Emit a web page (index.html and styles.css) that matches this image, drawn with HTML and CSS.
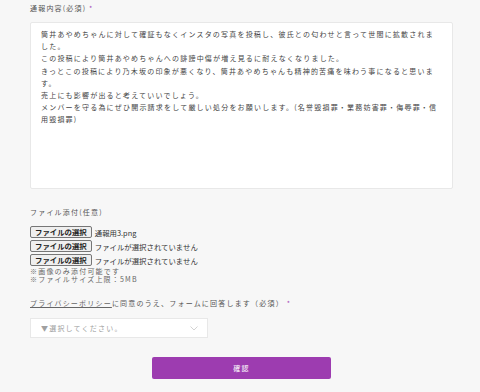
FILE: index.html
```html
<!DOCTYPE html>
<html lang="ja">
<head>
    <meta charset="UTF-8">
    <meta name="viewport" content="width=device-width, initial-scale=1.0">
    <title>通報フォーム</title>
    <link rel="stylesheet" href="styles.css">
</head>
<body>
    <form class="report-form">
        <div class="form-group">
            <label class="form-label" for="content">通報内容(必須) <span class="required">*</span></label>
            <textarea id="content" class="form-textarea">筒井あやめちゃんに対して確証もなくインスタの写真を投稿し、彼氏との匂わせと言って世間に拡散されました。
この投稿により筒井あやめちゃんへの誹謗中傷が増え見るに耐えなくなりました。
きっとこの投稿により乃木坂の印象が悪くなり、筒井あやめちゃんも精神的苦痛を味わう事になると思います。
売上にも影響が出ると考えていいでしょう。
メンバーを守る為にぜひ開示請求をして厳しい処分をお願いします。(名誉毀損罪・業務妨害罪・侮辱罪・信用毀損罪)</textarea>
        </div>

        <div class="form-group files">
            <p class="form-label">ファイル添付(任意)</p>
            <div class="file-row">
                <button type="button" class="file-btn">ファイルの選択</button>
                <span class="file-name">通報用3.png</span>
            </div>
            <div class="file-row">
                <button type="button" class="file-btn">ファイルの選択</button>
                <span class="file-name">ファイルが選択されていません</span>
            </div>
            <div class="file-row">
                <button type="button" class="file-btn">ファイルの選択</button>
                <span class="file-name">ファイルが選択されていません</span>
            </div>
            <p class="file-note">※画像のみ添付可能です<br>※ファイルサイズ上限：5MB</p>
        </div>

        <div class="form-group privacy">
            <p class="form-label"><a href="#" class="policy-link">プライバシーポリシー</a>に同意のうえ、フォームに回答します（必須） <span class="required">*</span></p>
            <div class="select-wrap">
                <select class="form-select">
                    <option>▼選択してください。</option>
                    <option>同意する</option>
                </select>
                <svg class="select-arrow" width="8" height="5" viewBox="0 0 8 5">
                    <path d="M0.5 0.5 L4 4 L7.5 0.5" fill="none" stroke="#c8c8c8" stroke-width="0.8"/>
                </svg>
            </div>
        </div>

        <div class="submit-area">
            <button type="button" class="submit-btn">確認</button>
        </div>
    </form>
</body>
</html>
```

FILE: styles.css
```css
body {
    margin: 0;
    background: #f7f7f7;
    font-family: "Noto Sans CJK JP", "Noto Sans", sans-serif;
    color: #555;
}

.report-form {
    width: 423px;
    margin-left: 30px;
    padding-top: 2px;
}

.form-label {
    display: block;
    margin: 0;
    font-size: 7px;
    line-height: 12px;
    letter-spacing: 1.2px;
    color: #555;
}

.required {
    color: #a64bb8;
}

.form-textarea {
    display: block;
    box-sizing: border-box;
    width: 423px;
    height: 167px;
    margin-top: 8px;
    padding: 5px 11.5px 5px 10px;
    border: 1px solid #e8e8e8;
    border-radius: 2px;
    background: #fff;
    font-family: "Noto Sans CJK JP", "Noto Sans", sans-serif;
    font-size: 7px;
    line-height: 12.2px;
    letter-spacing: 1.2px;
    color: #444;
    resize: none;
    outline: none;
}

.files {
    margin-top: 17px;
}

.files .form-label {
    margin-bottom: 8px;
}

.file-row {
    display: flex;
    align-items: center;
    height: 12px;
    margin-bottom: 2px;
}

.file-btn {
    box-sizing: border-box;
    height: 12px;
    padding: 0 4px;
    border: 1px solid #767676;
    border-radius: 2px;
    background: #efefef;
    font-family: "Noto Sans CJK JP", "Noto Sans", sans-serif;
    font-size: 7.4px;
    font-weight: bold;
    line-height: 10px;
    color: #222;
}

.file-name {
    margin-left: 3px;
    font-size: 7.4px;
    color: #333;
}

.file-note {
    margin: -1px 0 0;
    font-size: 7px;
    line-height: 8px;
    letter-spacing: 1.2px;
    color: #666;
}

.privacy {
    margin-top: 14px;
}

.policy-link {
    color: #666;
    text-decoration: underline;
}

.select-wrap {
    position: relative;
    width: 178px;
    margin-top: 9px;
}

.form-select {
    display: block;
    box-sizing: border-box;
    width: 178px;
    height: 20px;
    padding: 0 10px;
    border: 1px solid #e8e8e8;
    border-radius: 0;
    background: #fff;
    font-family: "Noto Sans CJK JP", "Noto Sans", sans-serif;
    font-size: 7px;
    letter-spacing: 1.2px;
    color: #a0a0a0;
    appearance: none;
    -webkit-appearance: none;
    outline: none;
}

.select-arrow {
    position: absolute;
    right: 10px;
    top: 8px;
    pointer-events: none;
}

.submit-area {
    display: flex;
    justify-content: center;
    margin-top: 19px;
}

.submit-btn {
    width: 179px;
    height: 22px;
    border: none;
    border-radius: 2px;
    background: #9d3cb0;
    color: #fff;
    font-family: "Noto Sans CJK JP", "Noto Sans", sans-serif;
    font-size: 7px;
    letter-spacing: 1.2px;
    cursor: pointer;
}
```
